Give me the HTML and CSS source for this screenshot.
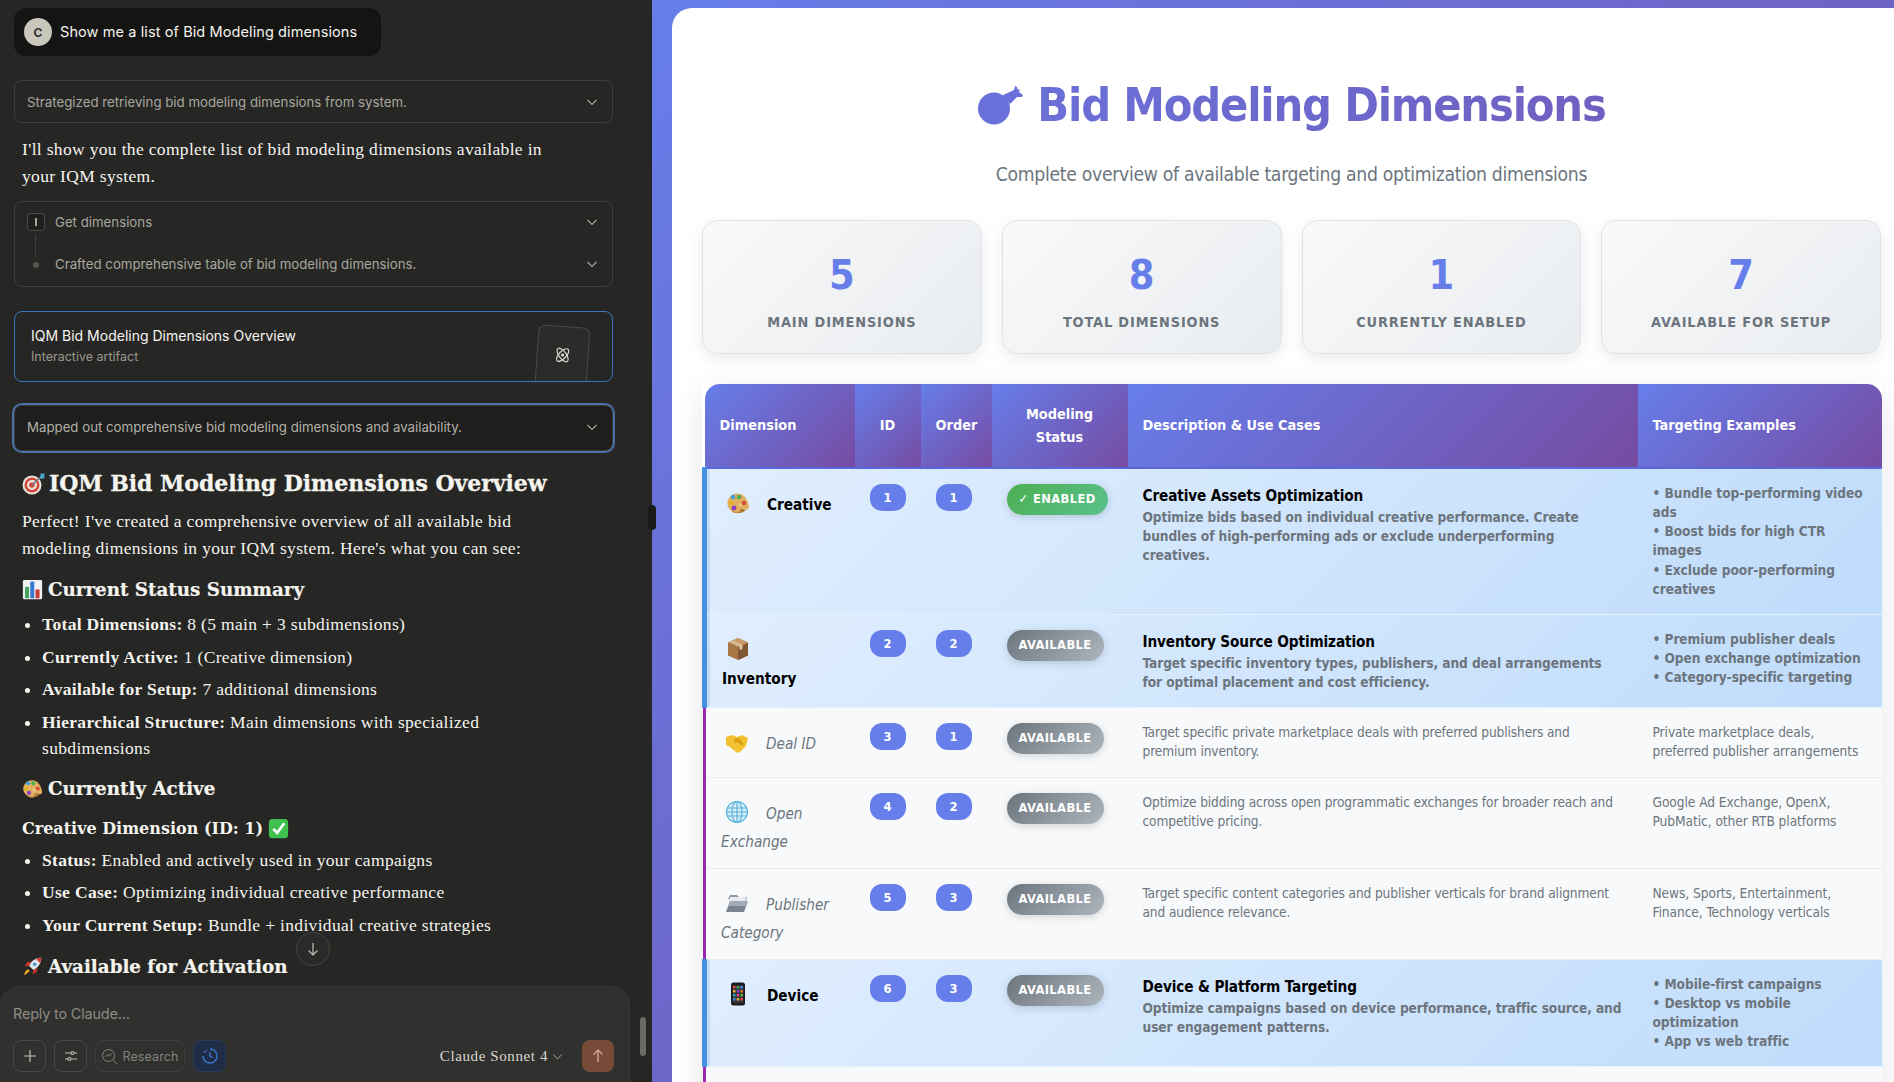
FILE: index.html
```html
<!DOCTYPE html>
<html>
<head>
    <title>Bid Modeling Dimensions</title>
    <link rel="stylesheet" href="styles.css">
</head>
<body>
    <svg class="defs" width="0" height="0">
        <symbol id="chev" viewBox="0 0 12 12"><path d="M1.5 4l4.5 4.5L10.500 4" fill="none" stroke="currentColor" stroke-width="1.1"/></symbol>
        <symbol id="palette" viewBox="0 0 24 24"><path d="M3 7c3-5 11-6 15-2 3 3 5 8 5 11 0 3-3 3-5 2-2-1-3 0-3 2s-3 3-6 2C3 20-1 13 3 7z" fill="#e0b060"/><path d="M5 19c4 3 8 3 9 1 0-2 1-3 3-2l3 1c-3 3-6 3-9 3-3 0-5-1-6-3z" fill="#b07a30"/><circle cx="7" cy="6" r="2.300" fill="#3f9fd8"/><circle cx="13" cy="6" r="2.300" fill="#4bb050"/><circle cx="5" cy="12" r="2.300" fill="#e2b320"/><circle cx="8" cy="17" r="2.400" fill="#8a3fc0"/><circle cx="18" cy="12" r="2.300" fill="#d84a3a"/><circle cx="14" cy="14" r="1.800" fill="#e8c888"/></symbol>
        <symbol id="box" viewBox="0 0 24 24"><path d="M12 1l10 4.500v13L12 23 2 18.500v-13z" fill="#a87745"/><path d="M12 10l10-4.500v13L12 23z" fill="#7f5630"/><path d="M2 5.500L12 1l10 4.500L12 10z" fill="#c79a68"/><path d="M6.500 3.500l10 4.500v4l-3 1.200V9.300L3.800 4.700z" fill="#d9c2a0"/></symbol>
        <symbol id="hands" viewBox="0 0 24 24"><path d="M1 7l6-2 5 2 5-2 6 3-2 8-6 6c-2 1-3 1-4 0l-6-5-4-2z" fill="#f2c230"/><path d="M9 9l5-1 5 6-2 2-5-4-3 1z" fill="#dba318"/></symbol>
        <symbol id="globe" viewBox="0 0 24 24"><circle cx="12" cy="12" r="10.500" fill="#d4ecf8"/><g fill="none" stroke="#58b0dc" stroke-width="1.100"><circle cx="12" cy="12" r="10.500"/><ellipse cx="12" cy="12" rx="5" ry="10.500"/><path d="M12 1.500v21M2 8h20M2 16h20M1.500 12h21"/></g></symbol>
        <symbol id="folder" viewBox="0 0 24 24"><path d="M3 8l2-4h7l2 2h8l-1 4z" fill="#8e98a4"/><path d="M5 6h16l-1 6H5z" fill="#e8eaee"/><path d="M1 21l4-11h18l-4 11z" fill="#79838f"/><path d="M5 10h18l-2 5H4z" fill="#a2acb6"/></symbol>
        <symbol id="phone" viewBox="0 0 24 24"><rect x="5" y="0.500" width="14" height="23" rx="2.500" fill="#1b1b1f"/><rect x="6.500" y="3" width="11" height="18" fill="#333"/><g><rect x="7" y="4" width="2.500" height="2.500" fill="#e04848"/><rect x="10.700" y="4" width="2.500" height="2.500" fill="#40a860"/><rect x="14.400" y="4" width="2.500" height="2.500" fill="#4088e0"/><rect x="7" y="8" width="2.500" height="2.500" fill="#e8b030"/><rect x="10.700" y="8" width="2.500" height="2.500" fill="#8048c8"/><rect x="14.400" y="8" width="2.500" height="2.500" fill="#e07030"/><rect x="7" y="12" width="2.500" height="2.500" fill="#30a8c0"/><rect x="10.700" y="12" width="2.500" height="2.500" fill="#e04890"/><rect x="14.400" y="12" width="2.500" height="2.500" fill="#60b040"/><rect x="7" y="16" width="2.500" height="2.500" fill="#4088e0"/><rect x="10.700" y="16" width="2.500" height="2.500" fill="#e8b030"/><rect x="14.400" y="16" width="2.500" height="2.500" fill="#e04848"/></g></symbol>
    </svg>

    <div class="app">
        <section class="chat">
            <div class="thread">
                <div class="bubble">
                    <span class="avatar">C</span>
                    <span>Show me a list of Bid Modeling dimensions</span>
                </div>

                <div class="fold first">
                    <span>Strategized retrieving bid modeling dimensions from system.</span>
                    <svg class="chev"><use href="#chev"/></svg>
                </div>

                <p class="intro">I'll show you the complete list of bid modeling dimensions available in your IQM system.</p>

                <div class="tools">
                    <div class="tool-row">
                        <span class="tool-mark"><i></i></span>
                        <span>Get dimensions</span>
                        <svg class="chev"><use href="#chev"/></svg>
                    </div>
                    <div class="tool-line"></div>
                    <div class="tool-row">
                        <span class="tool-dot"></span>
                        <span>Crafted comprehensive table of bid modeling dimensions.</span>
                        <svg class="chev"><use href="#chev"/></svg>
                    </div>
                </div>

                <div class="artifact-card">
                    <div class="artifact-title">IQM Bid Modeling Dimensions Overview</div>
                    <div class="artifact-sub">Interactive artifact</div>
                    <div class="artifact-tile">
                        <svg width="18" height="18" viewBox="0 0 18 18" fill="none" stroke="#d8d6cf" stroke-width="1.200">
                            <ellipse cx="9" cy="9" rx="3.600" ry="8" transform="rotate(-40 9 9)"/>
                            <ellipse cx="9" cy="9" rx="3.600" ry="8" transform="rotate(40 9 9)"/>
                            <circle cx="9" cy="9" r="1" fill="#d8d6cf"/>
                        </svg>
                    </div>
                </div>

                <div class="fold focus">
                    <span>Mapped out comprehensive bid modeling dimensions and availability.</span>
                    <svg class="chev"><use href="#chev"/></svg>
                </div>

                <div class="answer">
                    <h2>
                        <svg class="emoji big" viewBox="0 0 24 24">
                            <circle cx="10" cy="14" r="9.500" fill="#e9e4de"/>
                            <circle cx="10" cy="14" r="7.500" fill="#d2473a"/>
                            <circle cx="10" cy="14" r="5" fill="#eee8e2"/>
                            <circle cx="10" cy="14" r="2.800" fill="#d2473a"/>
                            <path d="M10 14L20 5" stroke="#6a7f8c" stroke-width="1.600"/>
                            <path d="M18 7l1-5 2 1 2-1-1 3 1 2-4 1z" fill="#4aa8c8"/>
                        </svg>IQM Bid Modeling Dimensions Overview
                    </h2>
                    <p>Perfect! I've created a comprehensive overview of all available bid modeling dimensions in your IQM system. Here's what you can see:</p>
                    <h3>
                        <svg class="emoji" viewBox="0 0 24 24">
                            <rect x="1" y="1" width="22" height="22" rx="1.500" fill="#eef0f2"/>
                            <rect x="3.500" y="9" width="4.500" height="13" fill="#3fa55a"/>
                            <rect x="9.500" y="3" width="4.500" height="19" fill="#3478d0"/>
                            <rect x="15.500" y="12" width="4.500" height="10" fill="#c83a32"/>
                        </svg>Current Status Summary
                    </h3>
                    <ul class="list-a">
                        <li><b>Total Dimensions:</b> 8 (5 main + 3 subdimensions)</li>
                        <li><b>Currently Active:</b> 1 (Creative dimension)</li>
                        <li><b>Available for Setup:</b> 7 additional dimensions</li>
                        <li><b>Hierarchical Structure:</b> Main dimensions with specialized subdimensions</li>
                    </ul>
                    <h3 class="gap">
                        <svg class="emoji"><use href="#palette"/></svg>Currently Active
                    </h3>
                    <h4>Creative Dimension (ID: 1)
                        <svg class="emoji check" viewBox="0 0 24 24">
                            <rect x="1" y="1" width="22" height="22" rx="4" fill="#3fc04f"/>
                            <path d="M6 12.500l4.500 4.500L18.500 6" fill="none" stroke="#fff" stroke-width="3"/>
                        </svg>
                    </h4>
                    <ul>
                        <li><b>Status:</b> Enabled and actively used in your campaigns</li>
                        <li><b>Use Case:</b> Optimizing individual creative performance</li>
                        <li><b>Your Current Setup:</b> Bundle + individual creative strategies</li>
                    </ul>
                    <h3 class="gap-wide">
                        <svg class="emoji" viewBox="0 0 24 24">
                            <path d="M22 2c-6 0-11 3-14 9l5 5c6-3 9-8 9-14z" fill="#dfe3e8"/>
                            <path d="M22 2c-2 0-4 .5-6 1.500L20.500 8c1-2 1.500-4 1.500-6z" fill="#d2392f"/>
                            <circle cx="14.500" cy="9.500" r="2" fill="#4a90d0"/>
                            <path d="M8 11l-5 1 3-5 4-1zM13 16l-1 5 5-3 1-4z" fill="#c9362c"/>
                            <path d="M7 15l2 2-6 5c-1-2 1-6 4-7z" fill="#f2a020"/>
                        </svg>Available for Activation
                    </h3>
                </div>
            </div>

            <button class="jump">
                <svg width="16" height="16" viewBox="0 0 16 16" fill="none" stroke="#c2c0b6" stroke-width="1.200"><path d="M8 2v12M3.500 9.500L8 14l4.500-4.500"/></svg>
            </button>

            <div class="composer">
                <div class="reply">Reply to Claude...</div>
                <div class="composer-bar">
                    <span class="tool-btn">
                        <svg width="16" height="16" viewBox="0 0 16 16" fill="none" stroke="#c2c0b6" stroke-width="1.200"><path d="M8 2v12M2 8h12"/></svg>
                    </span>
                    <span class="tool-btn">
                        <svg width="16" height="16" viewBox="0 0 16 16" fill="none" stroke="#c2c0b6" stroke-width="1.100"><path d="M2 5h6M11 5h3M2 11h3M8 11h6"/><circle cx="9.500" cy="5" r="1.500"/><circle cx="6.500" cy="11" r="1.500"/></svg>
                    </span>
                    <span class="tool-btn research">
                        <svg width="17" height="17" viewBox="0 0 17 17" fill="none" stroke="#85837c" stroke-width="1"><circle cx="7.500" cy="7.500" r="6"/><path d="M12 12l4 4M4.500 9l2-2.500 2 1.500 2-2.500"/></svg>
                        <span>Research</span>
                    </span>
                    <span class="tool-btn history">
                        <svg width="18" height="18" viewBox="0 0 18 18" fill="none" stroke="#3a78cc" stroke-width="1.400"><path d="M9 2a7 7 0 1 1-7 7" /><path d="M3 5.500L4.500 4M5.800 2.800L6.500 2.500" /><path d="M9 5v4.200l2.500 1.300"/></svg>
                    </span>
                    <span class="model">Claude Sonnet 4
                        <svg class="model-chev"><use href="#chev"/></svg>
                    </span>
                    <span class="send">
                        <svg width="16" height="16" viewBox="0 0 16 16" fill="none" stroke="#c9a594" stroke-width="1.400"><path d="M8 14V2M3.500 6.500L8 2l4.500 4.500"/></svg>
                    </span>
                </div>
            </div>
            <div class="scroll-thumb"></div>
        </section>

        <div class="handle"></div>

        <main class="canvas">
            <div class="sheet">
                <header class="sheet-head">
                    <h1>
                        <svg class="dart" width="46" height="46" viewBox="0 0 46 46">
                            <circle cx="17" cy="26.500" r="16" fill="#6a70da"/>
                            <path d="M26 13L37 8l1-4 2 1 1 3 2-1-1 3 4 3-1 2-5 0-7 7z" fill="#6a70da"/>
                        </svg><span>Bid Modeling Dimensions</span>
                    </h1>
                    <p>Complete overview of available targeting and optimization dimensions</p>
                </header>

                <div class="stats">
                    <div class="stat"><div class="stat-num">5</div><div class="stat-label">Main Dimensions</div></div>
                    <div class="stat"><div class="stat-num">8</div><div class="stat-label">Total Dimensions</div></div>
                    <div class="stat"><div class="stat-num">1</div><div class="stat-label">Currently Enabled</div></div>
                    <div class="stat"><div class="stat-num">7</div><div class="stat-label">Available For Setup</div></div>
                </div>

                <div class="table-wrap">
                    <table>
                        <colgroup>
                            <col class="c-dim"><col class="c-id"><col class="c-order"><col class="c-status"><col class="c-desc"><col class="c-target">
                        </colgroup>
                        <thead>
                            <tr>
                                <th>Dimension</th>
                                <th class="mid">ID</th>
                                <th class="mid">Order</th>
                                <th class="mid">Modeling Status</th>
                                <th>Description &amp; Use Cases</th>
                                <th>Targeting Examples</th>
                            </tr>
                        </thead>
                        <tbody>
                            <tr class="main-row">
                                <td class="dim"><span class="dim-icon"><svg><use href="#palette"/></svg></span>Creative</td>
                                <td><span class="num">1</span></td>
                                <td><span class="num">1</span></td>
                                <td><span class="pill on">✓ Enabled</span></td>
                                <td><strong>Creative Assets Optimization</strong>Optimize bids based on individual creative performance. Create bundles of high-performing ads or exclude underperforming creatives.</td>
                                <td>• Bundle top-performing video ads<br>• Boost bids for high CTR images<br>• Exclude poor-performing creatives</td>
                            </tr>
                            <tr class="main-row">
                                <td class="dim"><span class="dim-icon"><svg><use href="#box"/></svg></span>Inventory</td>
                                <td><span class="num">2</span></td>
                                <td><span class="num">2</span></td>
                                <td><span class="pill">Available</span></td>
                                <td><strong>Inventory Source Optimization</strong>Target specific inventory types, publishers, and deal arrangements for optimal placement and cost efficiency.</td>
                                <td>• Premium publisher deals<br>• Open exchange optimization<br>• Category-specific targeting</td>
                            </tr>
                            <tr class="sub-row">
                                <td class="dim"><span class="dim-icon"><svg><use href="#hands"/></svg></span>Deal ID</td>
                                <td><span class="num">3</span></td>
                                <td><span class="num">1</span></td>
                                <td><span class="pill">Available</span></td>
                                <td>Target specific private marketplace deals with preferred publishers and premium inventory.</td>
                                <td>Private marketplace deals, preferred publisher arrangements</td>
                            </tr>
                            <tr class="sub-row">
                                <td class="dim"><span class="dim-icon"><svg><use href="#globe"/></svg></span>Open Exchange</td>
                                <td><span class="num">4</span></td>
                                <td><span class="num">2</span></td>
                                <td><span class="pill">Available</span></td>
                                <td>Optimize bidding across open programmatic exchanges for broader reach and competitive pricing.</td>
                                <td>Google Ad Exchange, OpenX, PubMatic, other RTB platforms</td>
                            </tr>
                            <tr class="sub-row">
                                <td class="dim"><span class="dim-icon"><svg><use href="#folder"/></svg></span>Publisher Category</td>
                                <td><span class="num">5</span></td>
                                <td><span class="num">3</span></td>
                                <td><span class="pill">Available</span></td>
                                <td>Target specific content categories and publisher verticals for brand alignment and audience relevance.</td>
                                <td>News, Sports, Entertainment, Finance, Technology verticals</td>
                            </tr>
                            <tr class="main-row">
                                <td class="dim"><span class="dim-icon"><svg><use href="#phone"/></svg></span>Device</td>
                                <td><span class="num">6</span></td>
                                <td><span class="num">3</span></td>
                                <td><span class="pill">Available</span></td>
                                <td><strong>Device &amp; Platform Targeting</strong>Optimize campaigns based on device performance, traffic source, and user engagement patterns.</td>
                                <td>• Mobile-first campaigns<br>• Desktop vs mobile optimization<br>• App vs web traffic</td>
                            </tr>
                            <tr class="sub-row">
                                <td class="dim">&nbsp;</td><td></td><td></td><td></td><td></td><td></td>
                            </tr>
                        </tbody>
                    </table>
                </div>
            </div>
        </main>
    </div>
</body>
</html>
```

FILE: styles.css
```css
* {
    box-sizing: border-box;
}
html, body {
    margin: 0;
    height: 100%;
    overflow: hidden;
}
body {
    font-family: Inter, "Noto Sans", sans-serif;
    background: #262624;
}
.defs {
    display: block;
    height: 0;
}
.app {
    display: flex;
    height: 1082px;
}

/* left chat column */
.chat {
    position: relative;
    width: 652px;
    flex-shrink: 0;
    display: flex;
    flex-direction: column;
    background: #262624;
    color: #f5f4ef;
}
.thread {
    flex: 1;
    min-height: 0;
    overflow: hidden;
    padding: 8px 39px 0 14px;
}
.bubble {
    display: flex;
    align-items: center;
    gap: 8px;
    width: 367px;
    height: 48px;
    padding: 0 10px 2px;
    background: #141413;
    border-radius: 12px;
    font-size: 14.500px;
    letter-spacing: 0.1px;
}
.avatar {
    width: 28px;
    height: 28px;
    margin-top: 2px;
    border-radius: 50%;
    background: #c9c6bc;
    color: #33322f;
    font-size: 12px;
    font-weight: 700;
    display: flex;
    align-items: center;
    justify-content: center;
}
.fold {
    display: flex;
    align-items: center;
    justify-content: space-between;
    height: 43px;
    padding: 0 14px 0 12px;
    border: 1px solid #3e3e3a;
    border-radius: 8px;
    font-size: 13.250px;
    color: #a9a79f;
}
.fold.first {
    margin-top: 24px;
}
.fold.focus {
    margin-top: 23px;
    height: 46px;
    padding-bottom: 2px;
    background: #1e1e1c;
    color: #b4b2aa;
    outline: 2px solid #4a70a8;
    outline-offset: 0;
}
.chev {
    width: 12px;
    height: 12px;
    color: #a9a79f;
    flex-shrink: 0;
}
.intro {
    margin: 13px 0 11px 8px;
    width: 540px;
    font-family: "Liberation Serif", serif;
    font-size: 17.500px;
    line-height: 27px;
    letter-spacing: 0.33px;
}
.tools {
    border: 1px solid #3e3e3a;
    border-radius: 8px;
    height: 86px;
    padding: 10px 14px 0 12px;
    font-size: 13.250px;
    color: #a9a79f;
}
.tool-row {
    display: flex;
    align-items: center;
    height: 20px;
}
.tool-row span:nth-child(2) {
    flex: 1;
}
.tool-mark {
    width: 18px;
    height: 18px;
    margin-right: 10px;
    border: 1px solid #4a4a46;
    border-radius: 4px;
    background: #1f1f1d;
    display: flex;
    align-items: center;
    justify-content: center;
}
.tool-mark i {
    display: block;
    width: 2px;
    height: 8px;
    background: #a9a79f;
}
.tool-line {
    width: 1px;
    height: 23px;
    margin: 3px 0 -4px 8px;
    background: #3e3e3a;
}
.tool-dot {
    width: 6px;
    height: 6px;
    margin: 2px 16px 0 6px;
    border-radius: 50%;
    background: #55544f;
}
.artifact-card {
    position: relative;
    margin-top: 24px;
    height: 71px;
    padding: 15px 16px;
    border: 1px solid #3f74bd;
    border-radius: 8px;
    overflow: hidden;
}
.artifact-title {
    font-size: 14px;
    line-height: 18px;
}
.artifact-sub {
    margin-top: 4px;
    font-size: 12.500px;
    line-height: 16px;
    color: #9a9890;
}
.artifact-tile {
    position: absolute;
    left: 521px;
    top: 14px;
    width: 52px;
    height: 76px;
    border: 1px solid #4a4a46;
    border-radius: 7px;
    background: #2b2b29;
    transform: rotate(4deg);
    display: flex;
    padding-top: 19px;
    justify-content: center;
}
.answer {
    margin-left: 8px;
    width: 540px;
    font-family: "Liberation Serif", serif;
    font-size: 17.500px;
    letter-spacing: 0.33px;
    color: #f5f4ef;
}
.answer h2 {
    display: flex;
    align-items: center;
    margin: 15px 0 0;
    height: 34px;
    font-family: "DejaVu Serif", serif;
    font-size: 22px;
    font-weight: 700;
    letter-spacing: -0.05px;
    white-space: nowrap;
    -webkit-text-stroke: 0.3px;
}
.answer p {
    margin: 8px 0 0;
    line-height: 27px;
}
.answer h3 {
    display: flex;
    align-items: center;
    margin: 14px 0 0;
    height: 26px;
    font-family: "DejaVu Serif", serif;
    font-size: 18.300px;
    font-weight: 700;
    letter-spacing: 0;
    -webkit-text-stroke: 0.2px;
}
.answer h3.gap {
    margin-top: 15px;
}
.answer h3.gap-wide {
    margin-top: 16px;
}
.answer h4 {
    display: flex;
    align-items: center;
    margin: 15px 0 0;
    height: 24px;
    font-family: "DejaVu Serif", serif;
    font-size: 16px;
    font-weight: 700;
    letter-spacing: 0;
}
.answer ul {
    margin: 6px 0 0;
    padding-left: 20px;
}
.answer ul.list-a {
    margin-top: 9px;
}
.answer li {
    line-height: 26px;
    margin-bottom: 6.500px;
}
.emoji {
    width: 21px;
    height: 21px;
    margin-right: 5px;
    flex-shrink: 0;
}
.emoji.big {
    width: 24px;
    height: 24px;
    margin-right: 3px;
}
.emoji.check {
    margin: 0 0 0 5px;
}
.jump {
    position: absolute;
    left: 296px;
    top: 932px;
    width: 34px;
    height: 34px;
    padding: 8px;
    border: 1px solid #45453f;
    border-radius: 50%;
    background: #2a2a28;
}
.composer {
    height: 96px;
    width: 630px;
    flex-shrink: 0;
    background: #30302e;
    border: 1px solid #383835;
    border-bottom: none;
    border-left: none;
    border-radius: 0 20px 0 0;
    border-top-left-radius: 20px;
    padding: 16px 15px 0 13px;
}
.reply {
    font-size: 14.500px;
    line-height: 22px;
    letter-spacing: -0.2px;
    color: #8d8b84;
}
.composer-bar {
    display: flex;
    align-items: center;
    gap: 8px;
    margin-top: 15px;
    height: 32px;
}
.tool-btn {
    display: flex;
    align-items: center;
    justify-content: center;
    width: 33px;
    height: 32px;
    border: 1px solid #484844;
    border-radius: 8px;
}
.tool-btn.research {
    width: 90px;
    gap: 4px;
    border-color: #3e3e3a;
    font-size: 12.500px;
    letter-spacing: 0.1px;
    color: #85837c;
}
.tool-btn.history {
    background: #1f2e46;
    border-color: #283c5c;
}
.model {
    display: flex;
    align-items: center;
    margin-left: auto;
    font-family: "Liberation Serif", serif;
    font-size: 15px;
    letter-spacing: 0.6px;
    color: #d8d6cf;
}
.model-chev {
    width: 11px;
    height: 11px;
    margin: 0 11px 0 4px;
    color: #8d8b84;
}
.send {
    width: 32px;
    height: 32px;
    border-radius: 8px;
    background: #784b38;
    display: flex;
    align-items: center;
    justify-content: center;
}
.scroll-thumb {
    position: absolute;
    left: 640px;
    top: 1017px;
    width: 6px;
    height: 39px;
    border-radius: 3px;
    background: #6a6a66;
}
.handle {
    position: absolute;
    left: 648px;
    top: 505px;
    z-index: 2;
    width: 8px;
    height: 25px;
    border-radius: 4px;
    background: #1a1a18;
}

/* right artifact */
.canvas {
    flex: 1;
    min-width: 0;
    overflow: hidden;
    padding: 8px 0 0 20px;
    background: linear-gradient(135deg, #667eea 0%, #764ba2 100%);
}
.sheet {
    width: 1239px;
    height: 1200px;
    padding: 0 30px;
    background: #fff;
    border-radius: 20px;
    font-family: "DejaVu Sans Condensed", "DejaVu Sans", sans-serif;
    font-stretch: condensed;
}
.sheet-head {
    padding-top: 67px;
    text-align: center;
}
.sheet-head h1 {
    display: flex;
    align-items: center;
    justify-content: center;
    gap: 14px;
    height: 60px;
    margin: 0;
    font-size: 46.500px;
    font-weight: 700;
    letter-spacing: -1.200px;
    color: #6c67cc;
}
.sheet-head h1 span {
    background: linear-gradient(135deg, #6a70d8, #7060c0);
    -webkit-background-clip: text;
    background-clip: text;
    color: transparent;
}
.sheet-head p {
    margin: 25px 0 0;
    font-size: 19.200px;
    line-height: 30px;
    letter-spacing: -0.3px;
    color: #6c757d;
}
.dart {
    flex-shrink: 0;
}
.stats {
    display: grid;
    grid-template-columns: repeat(4, 1fr);
    gap: 20px;
    margin-top: 30px;
}
.stat {
    height: 134px;
    padding-top: 30px;
    text-align: center;
    background: linear-gradient(135deg, #f8f9fa, #e9ecef);
    border: 1px solid #dee2e6;
    border-radius: 15px;
    box-shadow: 0 5px 15px rgba(0, 0, 0, 0.08);
}
.stat-num {
    font-size: 41px;
    font-weight: 700;
    line-height: 48px;
    color: #667eea;
}
.stat-label {
    margin-top: 12px;
    font-size: 14.400px;
    font-weight: 700;
    line-height: 22px;
    letter-spacing: 0.85px;
    text-transform: uppercase;
    color: #6c757d;
}
.table-wrap {
    margin-top: 30px;
}
table {
    width: 1177px;
    table-layout: fixed;
    border-collapse: collapse;
    box-shadow: 0 10px 30px rgba(0, 0, 0, 0.1);
    font-size: 13.600px;
    line-height: 19.150px;
}
.c-dim { width: 150px; }
.c-id { width: 66px; }
.c-order { width: 71px; }
.c-status { width: 136px; }
.c-desc { width: 510px; }
.c-target { width: 244px; }
th {
    height: 84px;
    padding: 15px;
    text-align: left;
    font-size: 14.400px;
    line-height: 23px;
    font-weight: 700;
    color: #fff;
    background: linear-gradient(135deg, #667eea, #764ba2);
    border-bottom: 2px solid #5a67d8;
}
th.mid {
    text-align: center;
}
th:first-child {
    border-top-left-radius: 15px;
}
th:last-child {
    border-top-right-radius: 15px;
}
td {
    padding: 15px;
    vertical-align: top;
    color: #6c757d;
    border-bottom: 1px solid #e9ecef;
}
td:nth-child(5) {
    letter-spacing: -0.12px;
}
.main-row td:nth-child(5) {
    letter-spacing: -0.08px;
}
td:last-child {
    letter-spacing: -0.05px;
}
td strong {
    display: block;
    font-size: 15.200px;
    line-height: 24px;
    letter-spacing: -0.12px;
    color: #000;
}
.main-row {
    border-left: 5px solid #4a90e2;
    background: linear-gradient(135deg, #e0eefe, #bfdcfb);
    font-weight: 700;
}
.main-row td {
    border-bottom-color: #e3f2fd;
}
.sub-row {
    border-left: 3px solid #9c27b0;
    background: #f8f9fb;
}
.dim {
    font-size: 15.200px;
    line-height: 22px;
    font-style: italic;
}
.main-row .dim {
    font-style: normal;
    color: #000;
}
.dim-icon {
    display: inline-block;
    width: 35px;
    height: 38px;
    margin-right: 10px;
    padding: 7px 0 0 4px;
    vertical-align: -12px;
}
.dim-icon svg {
    display: block;
    width: 24px;
    height: 24px;
}
.num {
    display: block;
    width: 36px;
    height: 27px;
    border-radius: 12px;
    background: #667eea;
    color: #fff;
    font-size: 12.800px;
    font-weight: 700;
    line-height: 27px;
    text-align: center;
}
.pill {
    display: inline-block;
    height: 31px;
    padding: 0 12px;
    border-radius: 20px;
    background: linear-gradient(135deg, #6c757d, #adb5bd);
    box-shadow: 0 2px 8px rgba(0, 0, 0, 0.15);
    color: #fff;
    font-size: 12.800px;
    font-weight: 700;
    line-height: 30px;
    letter-spacing: 0.4px;
    text-transform: uppercase;
    white-space: nowrap;
}
.pill.on {
    background: linear-gradient(135deg, #4caf50, #5ac18e);
}
```
